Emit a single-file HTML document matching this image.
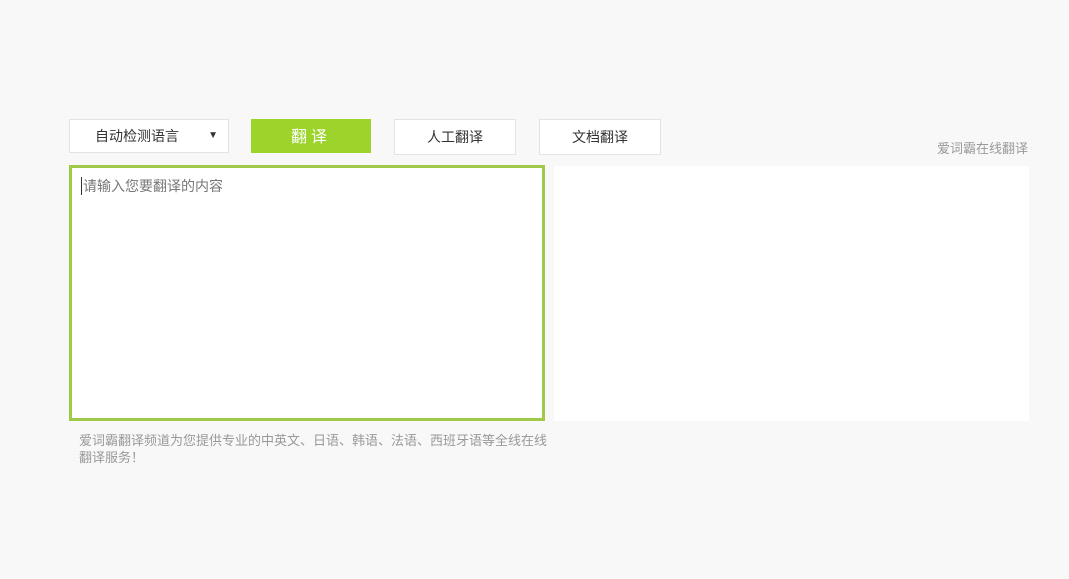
<!DOCTYPE html>
<html><head><meta charset="utf-8"><style>
body{margin:0;width:1069px;height:579px;background:#f8f8f8;font-family:"Liberation Sans","Noto Sans CJK SC",sans-serif;position:relative;overflow:hidden}
.b{position:absolute;box-sizing:border-box;background:#fff;border:1px solid #e3e3e3;font-size:14px;color:#333;text-align:center}
</style></head><body>
<div class="b" style="left:69px;top:119px;width:160px;height:34px;line-height:32px;text-align:left;padding-left:25px">自动检测语言<span style="position:absolute;right:10px;top:0;font-size:10px">▼</span></div>
<div class="b" style="left:251px;top:119px;width:120px;height:34px;line-height:37px;background:#9cd42c;border:none;color:#fff;font-size:16px;letter-spacing:4px">翻译</div>
<div class="b" style="left:394px;top:119px;width:122px;height:36px;line-height:34px">人工翻译</div>
<div class="b" style="left:539px;top:119px;width:122px;height:36px;line-height:34px">文档翻译</div>
<div style="position:absolute;left:937px;top:138px;font-size:13px;color:#999">爱词霸在线翻译</div>
<div style="position:absolute;left:69px;top:165px;width:476px;height:256px;box-sizing:border-box;border:3px solid #a0c94a;background:#fff">
<div style="position:absolute;left:9px;top:9px;font-size:14px;color:#777;border-left:1px solid #333;padding-left:1px;line-height:18px">请输入您要翻译的内容</div></div>
<div style="position:absolute;left:554px;top:166px;width:475px;height:255px;background:#fff"></div>
<div style="position:absolute;left:79px;top:432px;width:480px;font-size:13px;color:#999;line-height:17px">爱词霸翻译频道为您提供专业的中英文、日语、韩语、法语、西班牙语等全线在线翻译服务！</div>
</body></html>
